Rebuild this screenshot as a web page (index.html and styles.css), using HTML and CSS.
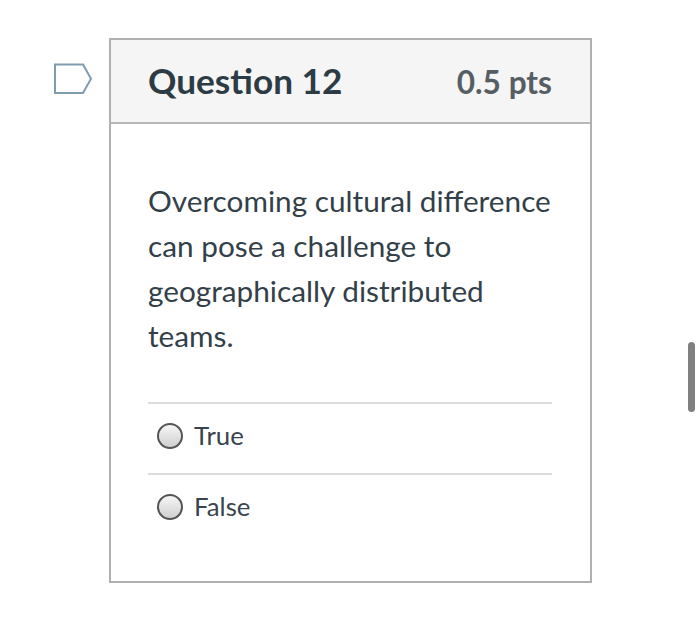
FILE: index.html
```html
<!DOCTYPE html>
<html>
<head>
    <title>Question 12</title>
    <link rel="stylesheet" href="styles.css">
</head>
<body>
    <div class="quiz-row">
        <div class="flag-col">
            <svg class="flag" width="38" height="31" viewBox="0 0 38 31">
                <path d="M1 1.5H29L37 15.75L29 30H1Z" fill="#fff" stroke="#7f9bb0" stroke-width="2"/>
            </svg>
        </div>
        <div class="question">
            <div class="question-header">
                <h2>Question 12</h2>
                <span class="points">0.5 pts</span>
            </div>
            <div class="question-body">
                <p class="question-text">Overcoming cultural difference can pose a challenge to geographically distributed teams.</p>
                <div class="answers">
                    <div class="answer">
                        <span class="radio"></span>
                        <span class="answer-label">True</span>
                    </div>
                    <div class="answer">
                        <span class="radio"></span>
                        <span class="answer-label">False</span>
                    </div>
                </div>
            </div>
        </div>
    </div>
    <div class="scroll-thumb"></div>
</body>
</html>
```

FILE: styles.css
```css
body {
    font-family: Lato, "Open Sans", sans-serif;
    margin: 0;
    padding: 38px 0 0 54px;
    background-color: #fff;
    color: #2d3b45;
    font-feature-settings: "liga" 1;
}

.quiz-row {
    display: flex;
    align-items: flex-start;
}

.flag-col {
    width: 55px;
    padding-top: 25px;
}

.flag {
    display: block;
}

.question {
    width: 479px;
    height: 541px;
    border: 2px solid #b0b0b0;
}

.question-header {
    display: flex;
    justify-content: space-between;
    align-items: center;
    height: 82px;
    padding: 0 38px 0 37px;
    background-color: #f5f5f5;
    border-bottom: 2px solid #b7b7b7;
}

.question-header h2 {
    margin: 0;
    padding-bottom: 2px;
    font-size: 35.2px;
    font-weight: 700;
}

.points {
    padding-top: 2px;
    font-size: 31.6px;
    font-weight: 700;
    color: #565e64;
}

.question-body {
    padding: 54px 38px 0 37px;
}

.question-text {
    margin: 0 -6px 44px 0;
    font-size: 29.75px;
    line-height: 45px;
    color: #333f49;
}

.answers {
    display: flex;
    flex-direction: column;
}

.answer {
    display: flex;
    align-items: center;
    gap: 11px;
    height: 63px;
    padding: 0 0 6px 9px;
    border-top: 2px solid #dcdcdc;
    font-size: 25.8px;
    color: #39444e;
}

.answer-label {
    padding-bottom: 1px;
}

.radio {
    box-sizing: border-box;
    width: 26px;
    height: 26px;
    border: 2px solid #555;
    border-radius: 50%;
    background: linear-gradient(#f6f6f6, #cfcfcf);
}

/* overlay scrollbar */
.scroll-thumb {
    position: absolute;
    left: 688px;
    top: 342px;
    width: 7px;
    height: 70px;
    border-radius: 4px;
    background: #808080;
}
```
